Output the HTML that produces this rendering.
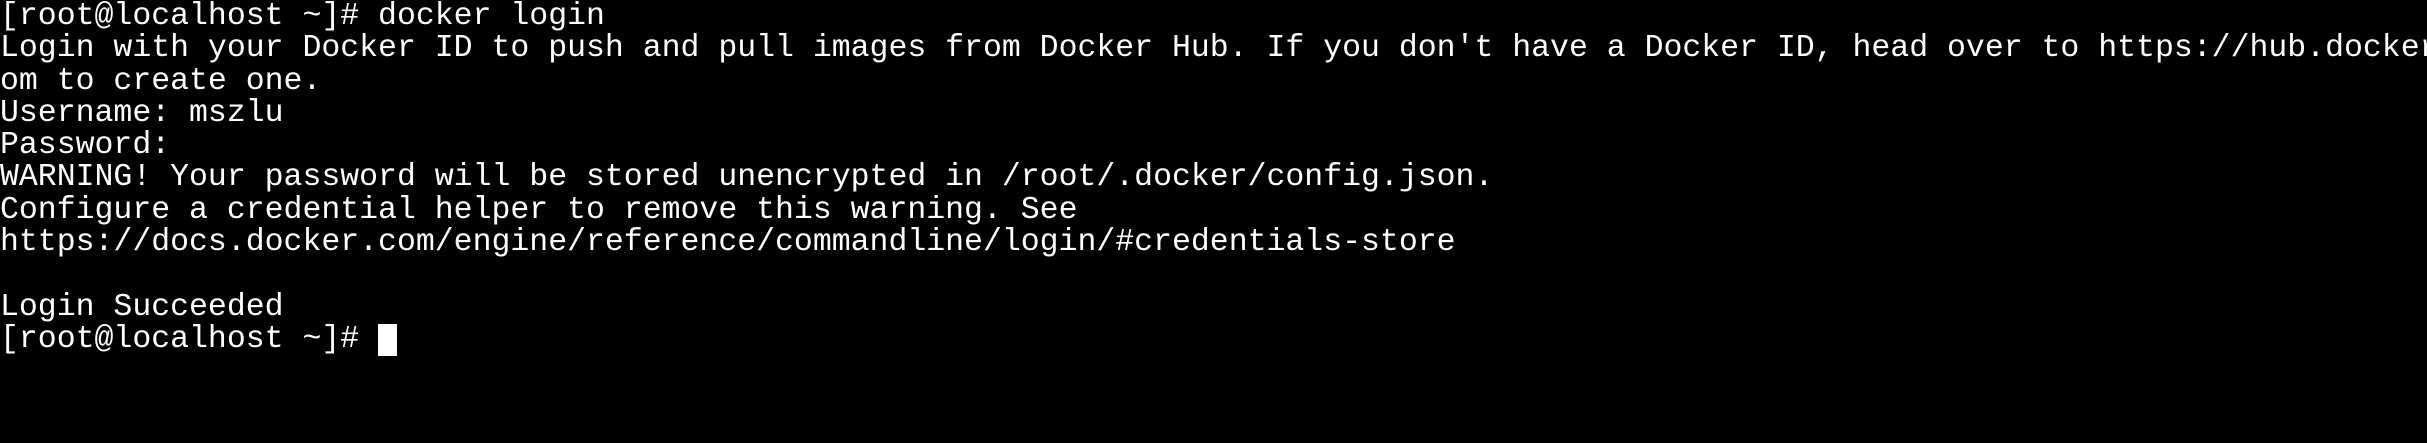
<!DOCTYPE html>
<html><head><meta charset="utf-8"><style>
html,body{margin:0;padding:0;background:#000;width:2427px;height:443px;overflow:hidden}
pre{margin:0;padding:0;color:#fff;font-family:"Liberation Mono",monospace;font-size:31.5px;line-height:32.3px;white-space:pre;position:relative;top:1px}
.c{display:inline-block;width:19px;height:32px;background:#fff;vertical-align:top}
</style></head><body><pre>[root@localhost ~]# docker login
Login with your Docker ID to push and pull images from Docker Hub. If you don't have a Docker ID, head over to https://hub.docker.c
om to create one.
Username: mszlu
Password:
WARNING! Your password will be stored unencrypted in /root/.docker/config.json.
Configure a credential helper to remove this warning. See
https://docs.docker.com/engine/reference/commandline/login/#credentials-store

Login Succeeded
[root@localhost ~]# <span class="c"></span></pre></body></html>
